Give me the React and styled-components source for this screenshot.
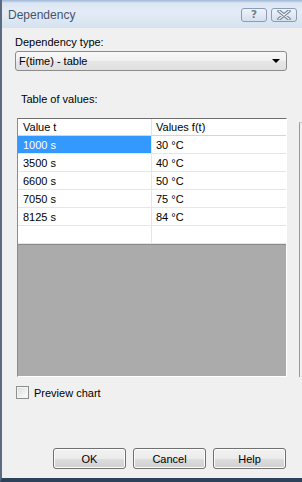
import React, { useState } from "react";
import styled, { createGlobalStyle } from "styled-components";

const GlobalStyle = createGlobalStyle`
    html, body {
        margin: 0;
        padding: 0;
        background: #f0f0f0;
    }
    * {
        box-sizing: border-box;
    }
`;

const rows = [
    { t: "1000 s", f: "30 °C" },
    { t: "3500 s", f: "40 °C" },
    { t: "6600 s", f: "50 °C" },
    { t: "7050 s", f: "75 °C" },
    { t: "8125 s", f: "84 °C" },
    { t: "", f: "" },
];

export default function App() {
    const [selected, setSelected] = useState(0);
    const [preview, setPreview] = useState(false);

    return (
        <>
            <GlobalStyle />
            <Window>
                <TitleBar>
                    <Title>Dependency</Title>
                    <CaptionButtons>
                        <CaptionButton aria-label="Help">
                            <HelpGlyph>?</HelpGlyph>
                        </CaptionButton>
                        <CaptionButton aria-label="Close">
                            <svg width="14" height="10" viewBox="0 0 14 10">
                                <path d="M2 1 L12 9 M12 1 L2 9" stroke="#6d7c90" strokeWidth="3.4" strokeLinecap="round" />
                                <path d="M2 1 L12 9 M12 1 L2 9" stroke="#eef3f9" strokeWidth="1.4" strokeLinecap="round" />
                            </svg>
                        </CaptionButton>
                    </CaptionButtons>
                </TitleBar>

                <Body>
                    <Label>Dependency type:</Label>
                    <Combo>
                        <span>F(time) - table</span>
                        <Arrow />
                    </Combo>

                    <GroupLabel>Table of values:</GroupLabel>

                    <TableRow>
                        <Grid>
                            <HeaderRow>
                                <HeaderCell>Value t</HeaderCell>
                                <HeaderCell>Values f(t)</HeaderCell>
                            </HeaderRow>
                            {rows.map((r, i) => (
                                <DataRow key={i} onClick={() => r.t && setSelected(i)}>
                                    <Cell $active={i === selected}>{r.t}</Cell>
                                    <Cell>{r.f}</Cell>
                                </DataRow>
                            ))}
                            <EmptyArea />
                        </Grid>
                        <Rail />
                    </TableRow>

                    <CheckRow onClick={() => setPreview(!preview)}>
                        <CheckBox $checked={preview} />
                        <span>Preview chart</span>
                    </CheckRow>

                    <Buttons>
                        <Button>OK</Button>
                        <Button>Cancel</Button>
                        <Button>Help</Button>
                    </Buttons>
                </Body>
            </Window>
        </>
    );
};

const Window = styled.div`
    width: 302px;
    height: 482px;
    display: flex;
    flex-direction: column;
    background-color: #f0f0f0;
    border-left: 2px solid #5b6a7e;
    border-bottom: 4px solid #2e415a;
    font-family: "Liberation Sans", Arial, sans-serif;
    font-size: 11px;
    color: #000;
    overflow: hidden;
`;

const TitleBar = styled.div`
    height: 28px;
    flex-shrink: 0;
    display: flex;
    align-items: center;
    justify-content: space-between;
    padding: 0 5px 1px 6px;
    background: linear-gradient(#9db5d4 0, #dbe6f3 3px, #e4ecf6 12px, #d6e2f0 100%);
`;

const Title = styled.div`
    font-size: 12px;
    color: #44546a;
    padding-top: 2px;
`;

const CaptionButtons = styled.div`
    display: flex;
    gap: 4px;
    margin-top: 2px;
`;

const CaptionButton = styled.div`
    width: 26px;
    height: 14px;
    border: 1px solid #8a9cb4;
    border-radius: 3px;
    background: linear-gradient(#eef3f9, #d5e0ee);
    display: flex;
    align-items: center;
    justify-content: center;
`;

const HelpGlyph = styled.span`
    font-family: "DejaVu Sans", sans-serif;
    font-size: 11px;
    font-weight: bold;
    line-height: 12px;
    color: #6d7c90;
    text-shadow: 0 0 1px #ffffff;
`;

const Body = styled.div`
    flex: 1;
    display: flex;
    flex-direction: column;
    padding: 8px 0 9px 13px;
`;

const Label = styled.div`
    line-height: 13px;
`;

const Combo = styled.div`
    margin-top: 2px;
    width: 272px;
    height: 20px;
    border: 1px solid #8b8b8b;
    border-radius: 3px;
    background: linear-gradient(#f8f8f8 0, #f0f0f0 50%, #e6e6e6 51%, #e0e0e0 100%);
    display: flex;
    align-items: center;
    justify-content: space-between;
    padding: 0 6px 0 3px;
`;

const Arrow = styled.div`
    width: 0;
    height: 0;
    border-left: 4px solid transparent;
    border-right: 4px solid transparent;
    border-top: 4px solid #000;
`;

const GroupLabel = styled.div`
    margin-top: 22px;
    margin-left: 6px;
    line-height: 13px;
`;

const TableRow = styled.div`
    margin-top: 12px;
    display: flex;
    align-items: flex-start;
`;

const Grid = styled.div`
    margin-left: 2px;
    width: 270px;
    height: 259px;
    display: flex;
    flex-direction: column;
    border-top: 1px solid #6e6e6e;
    border-left: 1px solid #8c8c8c;
    border-right: 1px solid #ffffff;
    border-bottom: 1px solid #ffffff;
    background-color: #ababab;
`;

const HeaderRow = styled.div`
    height: 17px;
    display: grid;
    grid-template-columns: 134px 1fr;
    background-color: #fff;
    border-bottom: 1px solid #d5d5d5;
`;

const HeaderCell = styled.div`
    display: flex;
    align-items: center;
    padding-left: 5px;
    border-right: 1px solid #e3e3e3;
    &:last-child {
        border-right: none;
        padding-left: 4px;
    }
`;

const DataRow = styled.div`
    height: 18px;
    display: grid;
    grid-template-columns: 134px 1fr;
    background-color: #fff;
    border-bottom: 1px solid #e6e6e6;
`;

const Cell = styled.div`
    display: flex;
    align-items: center;
    padding-left: 5px;
    border-right: 1px solid #e6e6e6;
    background-color: ${(p) => (p.$active ? "#3399ff" : "transparent")};
    color: ${(p) => (p.$active ? "#fff" : "#000")};
    &:last-child {
        border-right: none;
        padding-left: 4px;
    }
`;

const EmptyArea = styled.div`
    flex: 1;
    border-top: 1px solid #8a8a8a;
`;

const Rail = styled.div`
    margin-left: 12px;
    margin-top: 4px;
    width: 3px;
    height: 255px;
    border-left: 1px solid #9a9a9a;
    border-top: 1px solid #c8c8c8;
`;

const CheckRow = styled.div`
    margin-top: 9px;
    margin-left: 1px;
    display: flex;
    align-items: center;
    gap: 5px;
    height: 13px;
    cursor: default;
`;

const CheckBox = styled.div`
    width: 13px;
    height: 13px;
    border: 1px solid #8e8f8f;
    background: linear-gradient(135deg, #dcdcdc, #ffffff);
    box-shadow: inset 0 0 0 1px #f4f4f4;
`;

const Buttons = styled.div`
    margin-top: auto;
    display: flex;
    justify-content: flex-end;
    gap: 7px;
    padding-right: 16px;
`;

const Button = styled.button`
    width: 73px;
    height: 21px;
    border: 1px solid #707070;
    border-radius: 3px;
    background: linear-gradient(#f2f2f2 0, #ebebeb 50%, #dddddd 51%, #cfcfcf 100%);
    box-shadow: inset 0 0 0 1px #fcfcfc;
    font-family: "Liberation Sans", Arial, sans-serif;
    font-size: 11px;
    color: #000;
    padding: 0;
`;
